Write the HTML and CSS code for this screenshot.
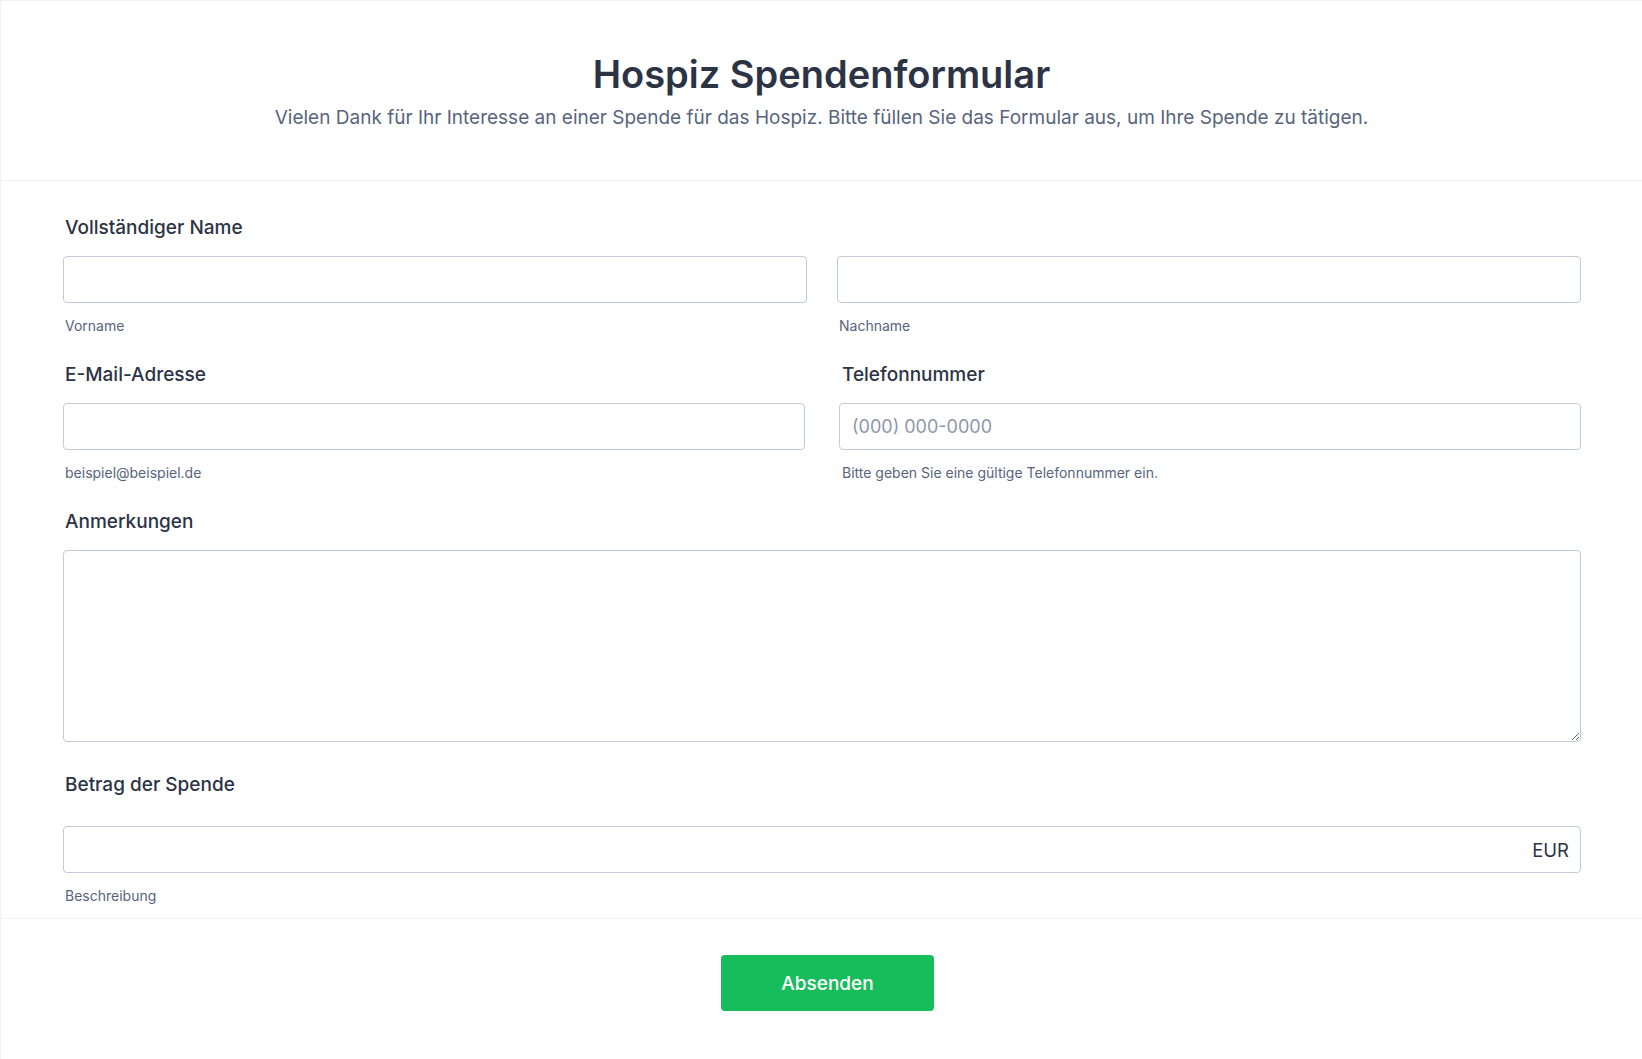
FILE: index.html
```html
<!DOCTYPE html>
<html lang="de">
<head>
    <meta charset="UTF-8">
    <meta name="viewport" content="width=device-width, initial-scale=1.0">
    <title>Hospiz Spendenformular</title>
    <link rel="stylesheet" href="styles.css">
</head>
<body>
    <form class="form-card">
        <div class="form-header">
            <h1 class="form-title">Hospiz Spendenformular</h1>
            <p class="form-subtitle">Vielen Dank für Ihr Interesse an einer Spende für das Hospiz. Bitte füllen Sie das Formular aus, um Ihre Spende zu tätigen.</p>
        </div>

        <div class="form-body">
            <div class="field">
                <label class="field-label">Vollständiger Name</label>
                <div class="row row-name">
                    <div class="col">
                        <input type="text" class="text-input">
                        <span class="sublabel">Vorname</span>
                    </div>
                    <div class="col">
                        <input type="text" class="text-input">
                        <span class="sublabel">Nachname</span>
                    </div>
                </div>
            </div>

            <div class="row row-contact">
                <div class="field col">
                    <label class="field-label">E-Mail-Adresse</label>
                    <input type="email" class="text-input">
                    <span class="sublabel">beispiel@beispiel.de</span>
                </div>
                <div class="field col col-phone">
                    <label class="field-label">Telefonnummer</label>
                    <input type="tel" class="text-input" placeholder="(000) 000-0000">
                    <span class="sublabel">Bitte geben Sie eine gültige Telefonnummer ein.</span>
                </div>
            </div>

            <div class="field field-notes">
                <label class="field-label">Anmerkungen</label>
                <textarea class="text-area"></textarea>
            </div>

            <div class="field">
                <label class="field-label">Betrag der Spende</label>
                <div class="amount-box">
                    <input type="text" class="amount-input">
                    <span class="currency">EUR</span>
                </div>
                <span class="sublabel">Beschreibung</span>
            </div>
        </div>

        <div class="form-footer">
            <button type="button" class="submit-button">Absenden</button>
        </div>
    </form>
</body>
</html>
```

FILE: styles.css
```css
*{
    box-sizing: border-box;
}
body{
    margin:0;
    background-color:#ffffff;
    font-family:Inter, "Noto Sans", sans-serif;
    color:#2c3345;
}
.form-card{
    min-height:1059px;
    border-left:1px solid #f1f1fa;
    border-top:1px solid #f1f1fa;
}

/* header */
.form-header{
    padding:50px 40px 48px;
    text-align:center;
    border-bottom:1px solid #f1f1fa;
}
.form-title{
    margin:0;
    font-size:38px;
    line-height:46px;
    font-weight:600;
    color:#2c3345;
}
.form-subtitle{
    margin:7px 0 0;
    font-size:19px;
    line-height:28px;
    color:#57647e;
}

/* fields */
.form-body{
    padding:33px 61px 12px 62px;
    border-bottom:1px solid #f1f1fa;
}
.field-label{
    display:block;
    font-size:19px;
    line-height:27px;
    font-weight:500;
    padding-left:2px;
    margin-bottom:15px;
}
.row{
    display:grid;
    grid-template-columns:1fr 1fr;
}
.row-name{
    column-gap:30px;
}
.row-contact{
    column-gap:34px;
    margin-top:25px;
}
.col{
    display:flex;
    flex-direction:column;
}
.col-phone .field-label,
.col-phone .sublabel{
    padding-left:3px;
}
.text-input{
    height:47px;
    width:100%;
    border:1px solid #c3cad8;
    border-radius:4px;
    padding:0 12px;
    font-family:inherit;
    font-size:18px;
    color:#2c3345;
    background:#ffffff;
}
.text-input::placeholder{
    color:#8f96a8;
}
.sublabel{
    display:block;
    font-size:14px;
    line-height:21px;
    color:#57647e;
    margin-top:12px;
    padding-left:2px;
}

.field-notes{
    margin-top:25px;
}
.text-area{
    display:block;
    width:100%;
    height:192px;
    border:1px solid #c3cad8;
    border-radius:4px;
    font-family:inherit;
    font-size:18px;
    padding:10px 12px;
    color:#2c3345;
}
.field-notes + .field{
    margin-top:29px;
}
.field-notes + .field .field-label{
    margin-bottom:28px;
}

.amount-box{
    display:flex;
    align-items:center;
    height:47px;
    border:1px solid #c3cad8;
    border-radius:4px;
    padding:0 11px 0 12px;
}
.amount-input{
    flex:1;
    border:none;
    outline:none;
    height:100%;
    font-family:inherit;
    font-size:18px;
    background:transparent;
}
.currency{
    font-size:18.5px;
    color:#2c3345;
}

/* footer */
.form-footer{
    display:flex;
    justify-content:center;
    padding:36px 0 40px;
}
.submit-button{
    width:213px;
    height:56px;
    margin-left:12px;
    background-color:#18bd5b;
    border:none;
    border-radius:4px;
    color:#ffffff;
    font-family:inherit;
    font-size:19px;
    font-weight:500;
    cursor:pointer;
}
.submit-button:hover{
    background-color:#16aa52;
}
```
